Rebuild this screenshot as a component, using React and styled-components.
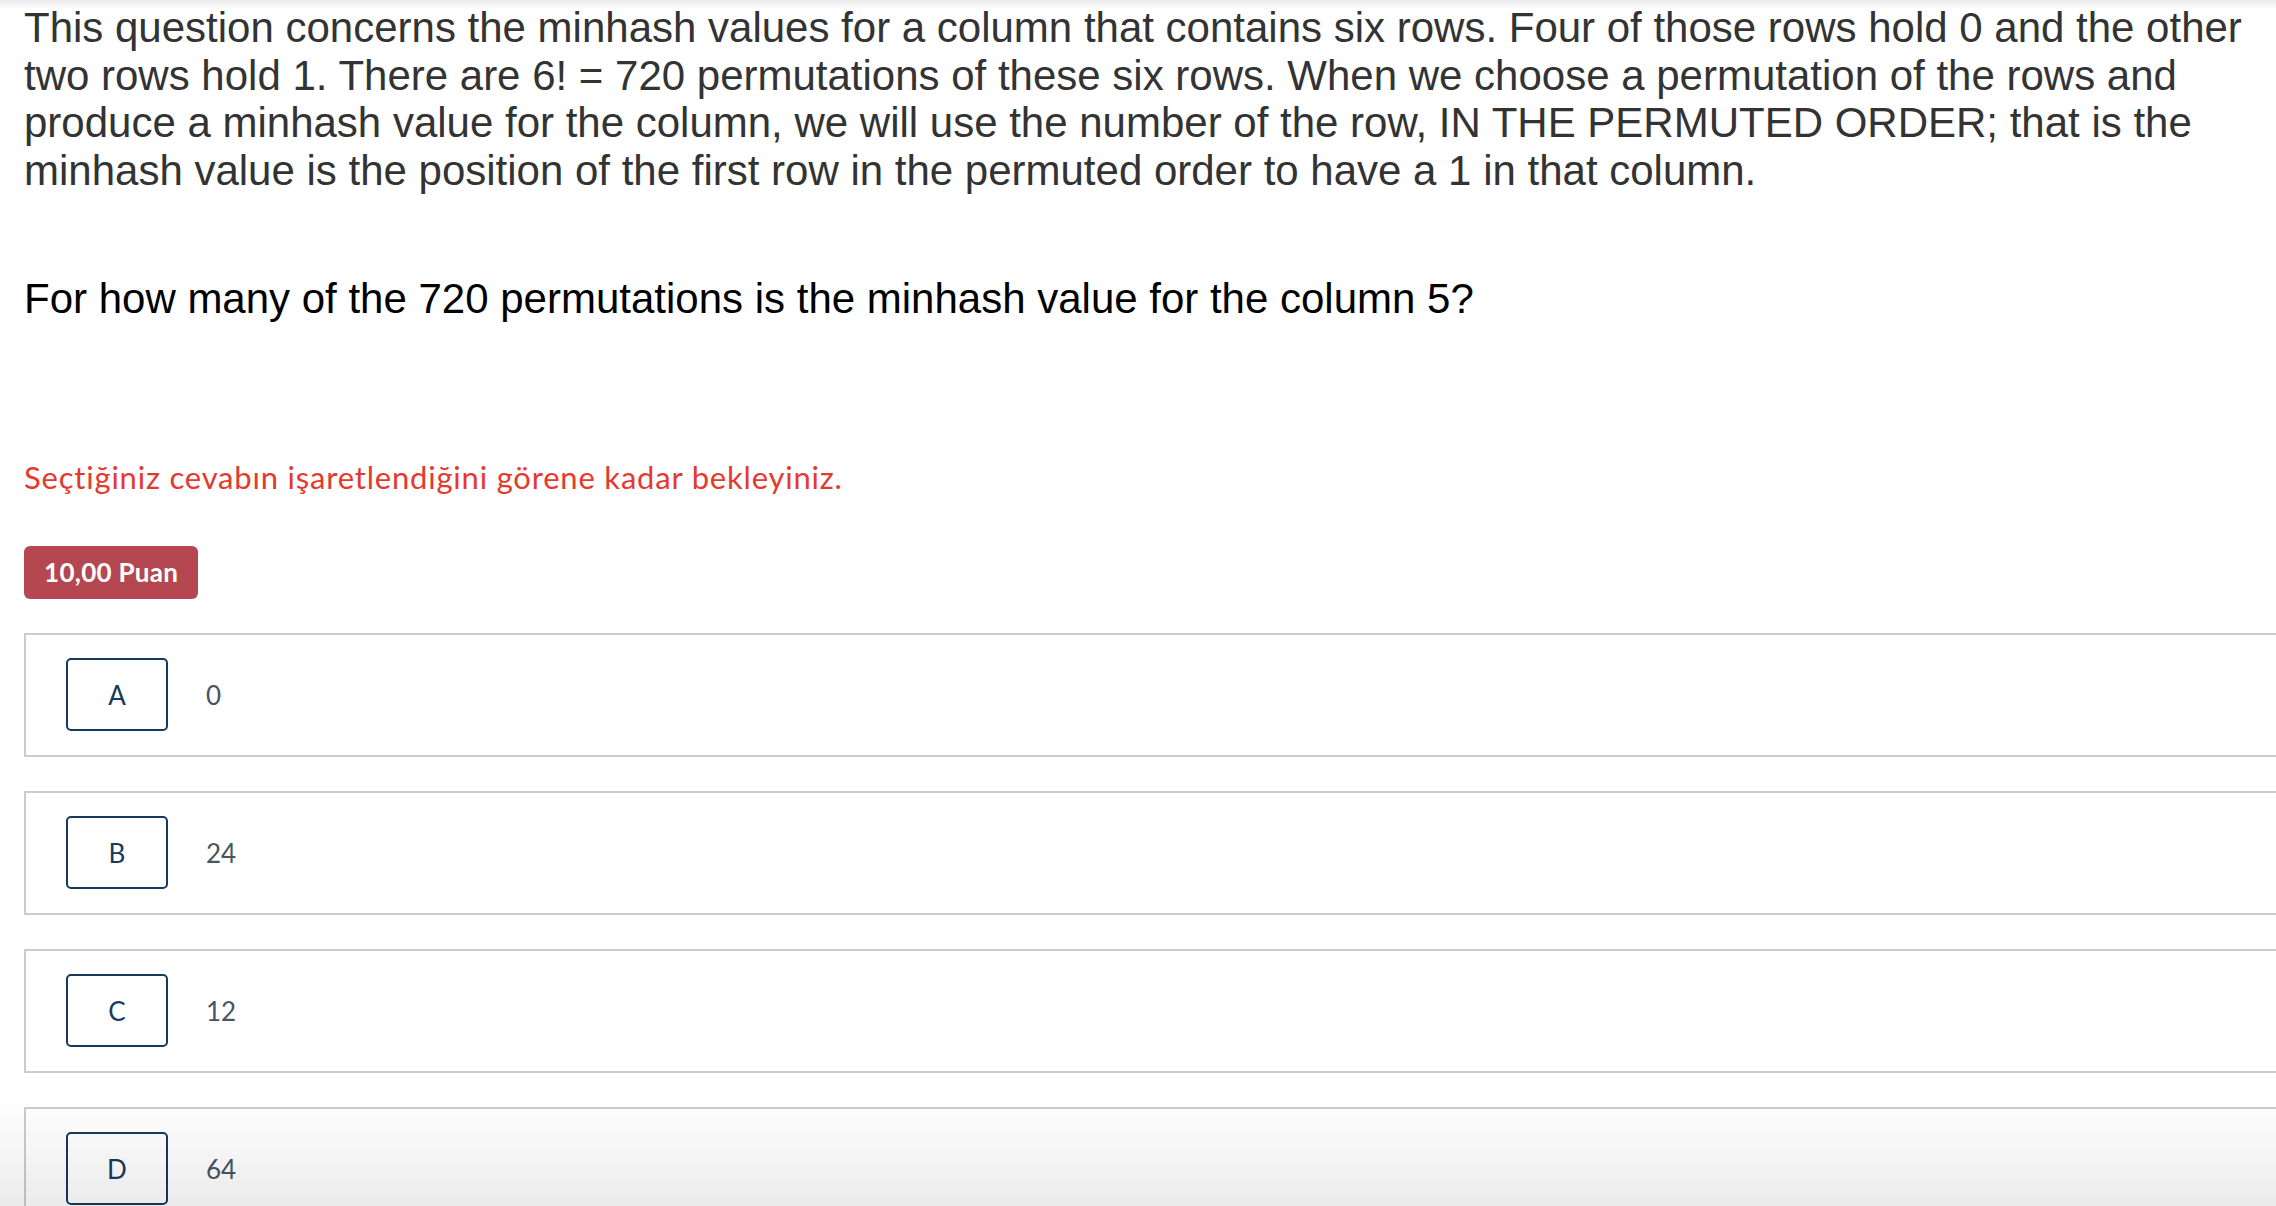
import styled, { createGlobalStyle } from 'styled-components';

const options = [
    { letter: 'A', value: '0' },
    { letter: 'B', value: '24' },
    { letter: 'C', value: '12' },
    { letter: 'D', value: '64' },
];

export default function App() {
    return (
        <>
            <GlobalStyle />
            <TopShade />
            <Page>
                <Question>
                    This question concerns the minhash values for a column that contains six rows. Four of those rows hold 0 and the other
                    two rows hold 1. There are 6! = 720 permutations of these six rows. When we choose a permutation of the rows and
                    produce a minhash value for the column, we will use the number of the row, IN THE PERMUTED ORDER; that is the
                    minhash value is the position of the first row in the permuted order to have a 1 in that column.
                </Question>
                <Prompt>For how many of the 720 permutations is the minhash value for the column 5?</Prompt>
                <Warning>Seçtiğiniz cevabın işaretlendiğini görene kadar bekleyiniz.</Warning>
                <Points>10,00 Puan</Points>
                <Options>
                    {options.map(opt => (
                        <Option key={opt.letter}>
                            <Letter>{opt.letter}</Letter>
                            <Value>{opt.value}</Value>
                        </Option>
                    ))}
                </Options>
            </Page>
            <BottomShade />
        </>
    );
}

const GlobalStyle = createGlobalStyle`
    body {
        margin: 0;
        background: #fff;
        overflow: hidden;
    }
`;

const Page = styled.main`
    display: flex;
    flex-direction: column;
    align-items: flex-start;
    width: 100%;
    padding: 4px 0 0 24px;
    box-sizing: border-box;
`;

const Question = styled.p`
    margin: 0;
    width: 100%;
    font-family: "Liberation Sans", Arial, sans-serif;
    font-size: 42px;
    line-height: 47.7px;
    color: #333;
`;

const Prompt = styled(Question)`
    margin-top: 80px;
    color: #000;
`;

const Warning = styled.p`
    margin: 136px 0 0;
    font-family: Lato, "Noto Sans", sans-serif;
    font-size: 31px;
    letter-spacing: 0.8px;
    line-height: 36px;
    color: #e6392e;
`;

const Points = styled.span`
    display: inline-flex;
    align-items: center;
    height: 53px;
    margin-top: 51px;
    padding: 0 20px;
    border-radius: 6px;
    background: #b4474f;
    color: #fff;
    font-family: Lato, "Noto Sans", sans-serif;
    font-weight: 700;
    font-size: 26px;
    letter-spacing: 0.3px;
`;

const Options = styled.div`
    display: flex;
    flex-direction: column;
    gap: 34px;
    margin-top: 34px;
    width: 100%;
`;

const Option = styled.div`
    display: flex;
    align-items: center;
    gap: 38px;
    height: 124px;
    box-sizing: border-box;
    padding: 0 40px;
    border: 2px solid #cccccc;
    border-right: none;
    background: #fff;
`;

const Letter = styled.div`
    display: flex;
    align-items: center;
    justify-content: center;
    width: 102px;
    height: 73px;
    box-sizing: border-box;
    border: 2px solid #173a5c;
    border-radius: 5px;
    color: #173a5c;
    font-family: Lato, "Noto Sans", sans-serif;
    font-size: 26px;
`;

const Value = styled.span`
    font-family: Lato, "Noto Sans", sans-serif;
    font-size: 26px;
    color: #4a5463;
`;

const TopShade = styled.div`
    position: fixed;
    top: 0;
    left: 0;
    right: 0;
    height: 9px;
    background: linear-gradient(#ebebeb, rgba(255, 255, 255, 0));
    pointer-events: none;
`;

const BottomShade = styled.div`
    position: fixed;
    left: 0;
    right: 0;
    bottom: 0;
    height: 110px;
    background: linear-gradient(rgba(0, 0, 0, 0), rgba(0, 0, 0, 0.08));
    pointer-events: none;
`;
